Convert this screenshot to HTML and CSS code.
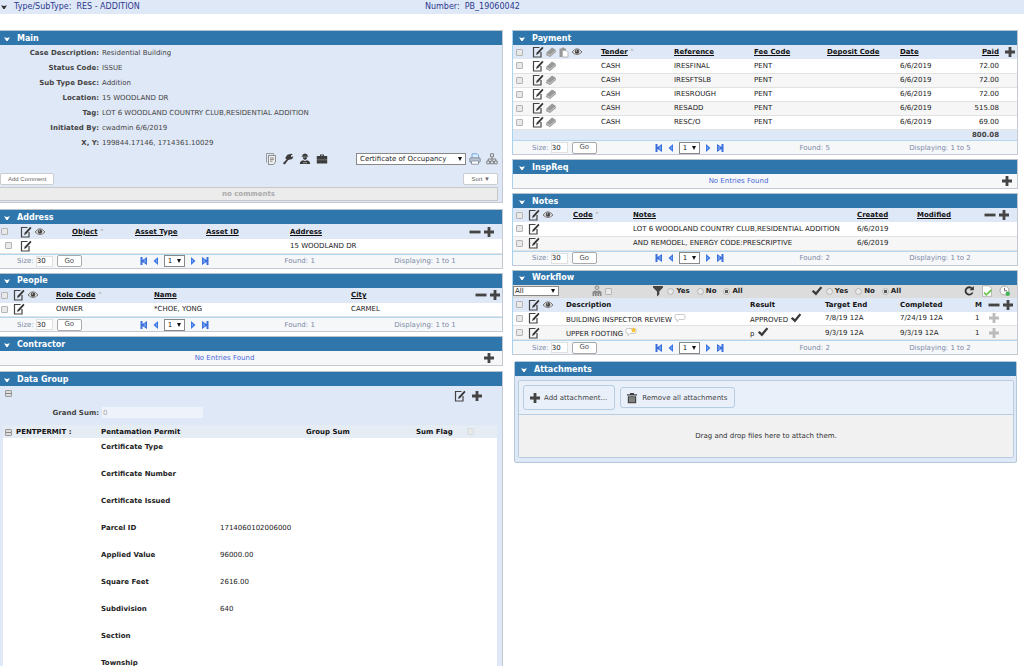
FILE: index.html
```html
<!DOCTYPE html>
<html lang="en">
<head>
<meta charset="utf-8">
<title>RES - ADDITION PB_19060042</title>
<link rel="stylesheet" href="styles.css">
</head>
<body>
<svg class="sprite" aria-hidden="true">
  <symbol id="chev" viewBox="0 0 8 6"><path d="M1 1.2 4 2l3-.8L4.6 5H3.4z" fill="currentColor"/></symbol>
  <symbol id="edit" viewBox="0 0 12 12"><path d="M7.500 1.500H1.500v9.500h7.500V6" fill="none" stroke="#444" stroke-width="1.200"/><path d="M10.300.7 11.500 1.900 6.200 8.100l-2.200 1 .7-2.300z" fill="#333"/></symbol>
  <symbol id="card" viewBox="0 0 12 12"><path d="M1 7 7 1.500 11 4v2L5 11 1 9z" fill="#999"/><path d="M1 7.200 5 9.300 11 4.300" stroke="#ddd" stroke-width=".7" fill="none"/></symbol>
  <symbol id="paste" viewBox="0 0 12 12"><path d="M1.500 2.500h2L5 1l1.500 1.500H8V5H4.500v6h-3z" fill="#999"/><path d="M4.500 4.500h3.500l2 2V11H4.500z" fill="#fff" stroke="#aaa" stroke-width=".8"/></symbol>
  <symbol id="eye" viewBox="0 0 12 12"><path d="M1 6q5-6.500 10 0-5 5-10 0z" fill="#ddd" stroke="#777"/><circle cx="6" cy="5.600" r="2.200" fill="#444"/><circle cx="5.400" cy="4.900" r=".7" fill="#ccc"/></symbol>
  <symbol id="plus" viewBox="0 0 12 12"><path d="M4.600 1h2.800v3.600H11v2.800H7.400V11H4.600V7.400H1V4.600h3.600z" fill="currentColor"/></symbol>
  <symbol id="minus" viewBox="0 0 12 12"><path d="M.5 4.600h11v2.800H.5z" fill="currentColor"/></symbol>
  <symbol id="first" viewBox="0 0 8 8"><path d="M.5 0h2v3L7 0v8L2.500 5v3h-2z" fill="#3a6fdc"/><path d="M5 2.200v3.600" stroke="#8db4f5" stroke-width="1.200"/></symbol>
  <symbol id="prev" viewBox="0 0 8 8"><path d="M6 0v8L1.500 4z" fill="#3a76e4"/><path d="M4.600 3v2" stroke="#86b0f5"/></symbol>
  <symbol id="next" viewBox="0 0 8 8"><path d="M2 0v8l4.500-4z" fill="#3a76e4"/><path d="M3.400 3v2" stroke="#86b0f5"/></symbol>
  <symbol id="last" viewBox="0 0 8 8"><path d="M7.500 0h-2v3L1 0v8l4.500-3v3h2z" fill="#3a6fdc"/><path d="M3 2.200v3.600" stroke="#8db4f5" stroke-width="1.200"/></symbol>
  <symbol id="sort" viewBox="0 0 6 4"><path d="M0 3.500 3 .5l3 3z" fill="#bbb"/></symbol>
  <symbol id="docs" viewBox="0 0 12 12"><path d="M1.500 9.500v-9h7V2" fill="none" stroke="#888" stroke-width=".8"/><path d="M3.500 2.500h7V9l-2 2.500h-5z" fill="#eee" stroke="#777" stroke-width=".8"/><path d="M5 5h4M5 6.600h4M5 8.200h2.500" stroke="#777" stroke-width=".8"/></symbol>
  <symbol id="wrench" viewBox="0 0 12 12"><path d="M.8 10.200 4.600 6.600 3.200 5 5.400 1.800 9 .8l1.800.4-1.900 1.300.3 1.400 2.200-.6-1.200 2.600-3 .9-1 .2-3.400 4.600z" fill="#3c3c3c"/></symbol>
  <symbol id="worker" viewBox="0 0 12 12"><path d="M3 3.200Q3.500.5 6 .5t3 2.700l.8.600H2.200z" fill="#3c3c3c"/><path d="M3.800 4.200h4.400Q8 7 6 7T3.800 4.200M.8 11q0-3 3.200-3.800L6 8l2-.8q3.200.8 3.200 3.800z" fill="#3c3c3c"/><path d="M4 9.800h4" stroke="#ddd" stroke-width=".6"/></symbol>
  <symbol id="case" viewBox="0 0 12 12"><path d="M4 3V1.500h4V3h3.200v7.500H.8V3zm1 0h2v-.6H5z" fill="#3c3c3c"/><path d="M1 6.800h10" stroke="#999" stroke-width=".6"/></symbol>
  <symbol id="printer" viewBox="0 0 12 12"><path d="M3 5V.8h5l1.500 1.500V5" fill="#d9ecff" stroke="#6ba0dc" stroke-width=".9"/><rect x=".8" y="4.800" width="10.400" height="4.500" rx="1" fill="#b9c4d2" stroke="#76818f" stroke-width=".8"/><path d="M2.500 8h7v3.200h-7z" fill="#fff" stroke="#7b8897" stroke-width=".8"/></symbol>
  <symbol id="tree" viewBox="0 0 12 12"><path d="M4.500.800h3v3h-3zM.8 8h2.800v2.800H.8zM4.600 8h2.800v2.800H4.600zM8.400 8h2.800v2.800H8.400zM6 4v4M2.200 8V6h7.600v2" fill="none" stroke="#777" stroke-width=".9"/></symbol>
  <symbol id="funnel" viewBox="0 0 12 12"><path d="M1 1h10v1.500L7.300 6.500v3L5 11.500v-5L1 2.500z" fill="#444"/></symbol>
  <symbol id="group" viewBox="0 0 12 12"><path d="M4 3.200Q3.800.8 6 .8t2 2.400L6 5z" fill="#ccc" stroke="#888"/><path d="M1.500 11V7L4 5.200 6 6.500l2-1.300L10.500 7v4z" fill="#888"/><path d="M3.500 11V8.500M6 11V8M8.500 11V8.500" stroke="#ddd" stroke-width=".7"/></symbol>
  <symbol id="check" viewBox="0 0 12 12"><path d="M.8 6.500 2.500 5 4.800 7 9.500 1.500 11.300 2.800 5 10.500z" fill="#3c3c3c"/></symbol>
  <symbol id="refresh" viewBox="0 0 12 12"><path d="M9 3.500A3.700 3.700 0 1 0 9.600 7.500" fill="none" stroke="#333" stroke-width="1.800"/><path d="M10.800 1v4.200H6.600z" fill="#333"/></symbol>
  <symbol id="pageok" viewBox="0 0 12 12"><path d="M1.500.8H8l2.500 2.500v8h-9z" fill="#fff" stroke="#aaa" stroke-width=".8"/><path d="M3 7.500 5.200 9.800 10.500 5" fill="none" stroke="#6cc552" stroke-width="1.800"/></symbol>
  <symbol id="clock" viewBox="0 0 12 12"><circle cx="5.500" cy="5.500" r="4.500" fill="#fafafa" stroke="#aaa"/><path d="M5.500 2.800v3H8" fill="none" stroke="#777"/><circle cx="8.800" cy="8.800" r="2.200" fill="#45b557"/></symbol>
  <symbol id="bubble" viewBox="0 0 12 12"><path d="M2.500 2.500h7q1.500 0 1.500 1.300v2.400q0 1.300-1.500 1.300H5L3 9.800V7.500q-2 0-2-1.300V3.800q0-1.300 1.500-1.300z" fill="#fff" stroke="#bbb" stroke-width=".8"/></symbol>
  <symbol id="star" viewBox="0 0 12 12"><path d="m8.500 1 .9 1.900 2.100.2-1.600 1.500.5 2.100-1.900-1-1.900 1L7.100 4.600 5.500 3.100l2.100-.2z" fill="#f7c331"/></symbol>
  <symbol id="trash" viewBox="0 0 12 12"><path d="M1 2.200h3V1h4v1.200h3v1.200H1zM1.800 4.200h8.400v7H1.800z" fill="#444"/><path d="M4 5.200v5M6 5.200v5M8 5.200v5" stroke="#ddd" stroke-width=".8"/></symbol>
</svg>

<header class="topbar">
  <svg class="chev"><use href="#chev"/></svg>
  <span class="type">Type/SubType:&nbsp; RES - ADDITION</span>
  <span>Number:&nbsp; PB_19060042</span>
</header>

<main class="columns">
  <div class="col left">
    <section class="panel main-panel">
      <h2><svg class="chev"><use href="#chev"/></svg>Main</h2>
      <dl class="facts">
        <dt>Case Description:</dt><dd>Residential Building</dd>
        <dt>Status Code:</dt><dd>ISSUE</dd>
        <dt>Sub Type Desc:</dt><dd>Addition</dd>
        <dt>Location:</dt><dd>15 WOODLAND DR</dd>
        <dt>Tag:</dt><dd>LOT 6 WOODLAND COUNTRY CLUB,RESIDENTIAL ADDITION</dd>
        <dt>Initiated By:</dt><dd>cwadmin 6/6/2019</dd>
        <dt>X, Y:</dt><dd>199844.17146, 1714361.10029</dd>
      </dl>
      <div class="case-tools">
        <button class="ico" aria-label="Documents"><svg><use href="#docs"/></svg></button>
        <button class="ico" aria-label="Tools"><svg><use href="#wrench"/></svg></button>
        <button class="ico" aria-label="Worker"><svg><use href="#worker"/></svg></button>
        <button class="ico" aria-label="Case"><svg><use href="#case"/></svg></button>
        <span class="drop report"><select aria-label="Report"><option>Certificate of Occupancy</option></select></span>
        <button class="ico" aria-label="Print"><svg><use href="#printer"/></svg></button>
        <button class="ico" aria-label="Hierarchy"><svg><use href="#tree"/></svg></button>
      </div>
      <div class="comment-tools"><button class="small">Add Comment</button><button class="small">Sort ▼</button></div>
      <p class="no-comments">no comments</p>
    </section>

    <section class="panel address">
      <h2><svg class="chev"><use href="#chev"/></svg>Address</h2>
      <table>
        <colgroup><col class="w72"><col class="w63"><col class="w71"><col class="w84"><col><col class="w40"></colgroup>
        <thead><tr>
          <th><div class="tools"><input type="checkbox" aria-label="Select all"><svg><use href="#edit"/></svg><svg><use href="#eye"/></svg></div></th>
          <th><a href="#">Object</a><svg class="sort"><use href="#sort"/></svg></th><th><a href="#">Asset Type</a></th><th><a href="#">Asset ID</a></th><th><a href="#">Address</a></th>
          <th><div class="acts"><svg><use href="#minus"/></svg><svg><use href="#plus"/></svg></div></th>
        </tr></thead>
        <tbody><tr><td><div class="tools inset"><input type="checkbox" aria-label="Select row"><svg><use href="#edit"/></svg></div></td><td></td><td></td><td></td><td>15 WOODLAND DR</td><td></td></tr></tbody>
      </table>
      <div class="pager">
        <div><label for="s1">Size:</label><input id="s1" type="text" value="30"><button>Go</button></div>
        <div class="nav"><svg><use href="#first"/></svg><svg><use href="#prev"/></svg><span class="drop"><select aria-label="Page"><option>1</option></select></span><svg><use href="#next"/></svg><svg><use href="#last"/></svg></div>
        <span>Found: 1</span><span>Displaying: 1 to 1</span>
      </div>
    </section>

    <section class="panel people">
      <h2><svg class="chev"><use href="#chev"/></svg>People</h2>
      <table>
        <colgroup><col class="w56"><col class="w98"><col class="w197"><col><col class="w40"></colgroup>
        <thead><tr>
          <th><div class="tools"><input type="checkbox" aria-label="Select all"><svg><use href="#edit"/></svg><svg><use href="#eye"/></svg></div></th>
          <th><a href="#">Role Code</a><svg class="sort"><use href="#sort"/></svg></th><th><a href="#">Name</a></th><th><a href="#">City</a></th>
          <th><div class="acts"><svg><use href="#minus"/></svg><svg><use href="#plus"/></svg></div></th>
        </tr></thead>
        <tbody><tr><td><div class="tools"><input type="checkbox" aria-label="Select row"><svg><use href="#edit"/></svg></div></td><td>OWNER</td><td>*CHOE, YONG</td><td>CARMEL</td><td></td></tr></tbody>
      </table>
      <div class="pager">
        <div><label for="s2">Size:</label><input id="s2" type="text" value="30"><button>Go</button></div>
        <div class="nav"><svg><use href="#first"/></svg><svg><use href="#prev"/></svg><span class="drop"><select aria-label="Page"><option>1</option></select></span><svg><use href="#next"/></svg><svg><use href="#last"/></svg></div>
        <span>Found: 1</span><span>Displaying: 1 to 1</span>
      </div>
    </section>

    <section class="panel contractor">
      <h2><svg class="chev"><use href="#chev"/></svg>Contractor</h2>
      <div class="empty"><a href="#">No Entries Found</a><button class="ico" aria-label="Add contractor"><svg><use href="#plus"/></svg></button></div>
    </section>

    <section class="panel data-group">
      <h2><svg class="chev"><use href="#chev"/></svg>Data Group</h2>
      <div class="group-tools"><button class="fold" aria-label="Collapse all"></button><span class="acts"><svg><use href="#edit"/></svg><svg><use href="#plus"/></svg></span></div>
      <div class="grand"><label for="grand">Grand Sum:</label><input id="grand" type="text" value="0" disabled></div>
      <table>
        <colgroup><col class="w98"><col class="w119"><col class="w86"><col class="w110"><col></colgroup>
        <thead><tr><th><button class="fold" aria-label="Collapse group"></button>PENTPERMIT :</th><th>Pentamation Permit</th><th></th><th>Group Sum</th><th><label for="flag">Sum Flag</label><input class="flag" id="flag" type="checkbox" disabled></th></tr></thead>
        <tbody>
          <tr><td></td><th>Certificate Type</th><td></td><td></td><td></td></tr>
          <tr><td></td><th>Certificate Number</th><td></td><td></td><td></td></tr>
          <tr><td></td><th>Certificate Issued</th><td></td><td></td><td></td></tr>
          <tr><td></td><th>Parcel ID</th><td>1714060102006000</td><td></td><td></td></tr>
          <tr><td></td><th>Applied Value</th><td>96000.00</td><td></td><td></td></tr>
          <tr><td></td><th>Square Feet</th><td>2616.00</td><td></td><td></td></tr>
          <tr><td></td><th>Subdivision</th><td>640</td><td></td><td></td></tr>
          <tr><td></td><th>Section</th><td></td><td></td><td></td></tr>
          <tr><td></td><th>Township</th><td></td><td></td><td></td></tr>
        </tbody>
      </table>
    </section>
  </div>

  <div class="col right">
    <section class="panel payment">
      <h2><svg class="chev"><use href="#chev"/></svg>Payment</h2>
      <table>
        <colgroup><col class="w88"><col class="w73"><col class="w80"><col class="w73"><col class="w73"><col class="w50"><col><col class="w18"></colgroup>
        <thead><tr>
          <th><div class="tools"><input type="checkbox" aria-label="Select all"><svg><use href="#edit"/></svg><svg><use href="#card"/></svg><svg><use href="#paste"/></svg><svg><use href="#eye"/></svg></div></th>
          <th><a href="#">Tender</a><svg class="sort"><use href="#sort"/></svg></th><th><a href="#">Reference</a></th><th><a href="#">Fee Code</a></th><th><a href="#">Deposit Code</a></th><th><a href="#">Date</a></th><th class="num"><a href="#">Paid</a></th>
          <th><div class="acts"><svg><use href="#plus"/></svg></div></th>
        </tr></thead>
        <tbody>
          <tr><td><div class="tools"><input type="checkbox" aria-label="Select row"><svg><use href="#edit"/></svg><svg><use href="#card"/></svg></div></td><td>CASH</td><td>IRESFINAL</td><td>PENT</td><td></td><td>6/6/2019</td><td class="num">72.00</td><td></td></tr>
          <tr><td><div class="tools"><input type="checkbox" aria-label="Select row"><svg><use href="#edit"/></svg><svg><use href="#card"/></svg></div></td><td>CASH</td><td>IRESFTSLB</td><td>PENT</td><td></td><td>6/6/2019</td><td class="num">72.00</td><td></td></tr>
          <tr><td><div class="tools"><input type="checkbox" aria-label="Select row"><svg><use href="#edit"/></svg><svg><use href="#card"/></svg></div></td><td>CASH</td><td>IRESROUGH</td><td>PENT</td><td></td><td>6/6/2019</td><td class="num">72.00</td><td></td></tr>
          <tr><td><div class="tools"><input type="checkbox" aria-label="Select row"><svg><use href="#edit"/></svg><svg><use href="#card"/></svg></div></td><td>CASH</td><td>RESADD</td><td>PENT</td><td></td><td>6/6/2019</td><td class="num">515.08</td><td></td></tr>
          <tr><td><div class="tools"><input type="checkbox" aria-label="Select row"><svg><use href="#edit"/></svg><svg><use href="#card"/></svg></div></td><td>CASH</td><td>RESC/O</td><td>PENT</td><td></td><td>6/6/2019</td><td class="num">69.00</td><td></td></tr>
        </tbody>
        <tfoot><tr><td colspan="7" class="num">800.08</td><td></td></tr></tfoot>
      </table>
      <div class="pager">
        <div><label for="s3">Size:</label><input id="s3" type="text" value="30"><button>Go</button></div>
        <div class="nav"><svg><use href="#first"/></svg><svg><use href="#prev"/></svg><span class="drop"><select aria-label="Page"><option>1</option></select></span><svg><use href="#next"/></svg><svg><use href="#last"/></svg></div>
        <span>Found: 5</span><span>Displaying: 1 to 5</span>
      </div>
    </section>

    <section class="panel inspreq">
      <h2><svg class="chev"><use href="#chev"/></svg>InspReq</h2>
      <div class="empty"><a href="#">No Entries Found</a><button class="ico" aria-label="Add inspection"><svg><use href="#plus"/></svg></button></div>
    </section>

    <section class="panel notes">
      <h2><svg class="chev"><use href="#chev"/></svg>Notes</h2>
      <table>
        <colgroup><col class="w60"><col class="w60"><col><col class="w60"><col class="w60"><col class="w40"></colgroup>
        <thead><tr>
          <th><div class="tools"><input type="checkbox" aria-label="Select all"><svg><use href="#edit"/></svg><svg><use href="#eye"/></svg></div></th>
          <th><a href="#">Code</a><svg class="sort"><use href="#sort"/></svg></th><th><a href="#">Notes</a></th><th><a href="#">Created</a></th><th><a href="#">Modified</a></th>
          <th><div class="acts"><svg><use href="#minus"/></svg><svg><use href="#plus"/></svg></div></th>
        </tr></thead>
        <tbody>
          <tr><td><div class="tools"><input type="checkbox" aria-label="Select row"><svg><use href="#edit"/></svg></div></td><td></td><td>LOT 6 WOODLAND COUNTRY CLUB,RESIDENTIAL ADDITION</td><td>6/6/2019</td><td></td><td></td></tr>
          <tr><td><div class="tools"><input type="checkbox" aria-label="Select row"><svg><use href="#edit"/></svg></div></td><td></td><td>AND REMODEL, ENERGY CODE:PRESCRIPTIVE</td><td>6/6/2019</td><td></td><td></td></tr>
        </tbody>
      </table>
      <div class="pager">
        <div><label for="s4">Size:</label><input id="s4" type="text" value="30"><button>Go</button></div>
        <div class="nav"><svg><use href="#first"/></svg><svg><use href="#prev"/></svg><span class="drop"><select aria-label="Page"><option>1</option></select></span><svg><use href="#next"/></svg><svg><use href="#last"/></svg></div>
        <span>Found: 2</span><span>Displaying: 1 to 2</span>
      </div>
    </section>

    <section class="panel workflow">
      <h2><svg class="chev"><use href="#chev"/></svg>Workflow</h2>
      <div class="filters">
        <span class="drop kind"><select aria-label="Kind"><option>All</option></select></span>
        <span class="set mine"><svg><use href="#group"/></svg><input type="checkbox" aria-label="Assigned to group"></span>
        <span class="set pick"><svg><use href="#funnel"/></svg><label><input type="radio" name="f">Yes</label><label><input type="radio" name="f">No</label><label><input type="radio" name="f" checked>All</label></span>
        <span class="set pick"><svg><use href="#check"/></svg><label><input type="radio" name="c">Yes</label><label><input type="radio" name="c">No</label><label><input type="radio" name="c" checked>All</label></span>
        <span class="set end"><svg><use href="#refresh"/></svg><svg><use href="#pageok"/></svg><svg><use href="#clock"/></svg></span>
      </div>
      <table>
        <colgroup><col class="w53"><col><col class="w75"><col class="w75"><col class="w75"><col class="w42"></colgroup>
        <thead><tr>
          <th><div class="tools"><input type="checkbox" aria-label="Select all"><svg><use href="#edit"/></svg><svg><use href="#eye"/></svg></div></th>
          <th>Description</th><th>Result</th><th>Target End</th><th>Completed</th>
          <th><div class="acts"><span>M</span><svg><use href="#minus"/></svg><svg><use href="#plus"/></svg></div></th>
        </tr></thead>
        <tbody>
          <tr><td><div class="tools"><input type="checkbox" aria-label="Select row"><svg><use href="#edit"/></svg></div></td><td>BUILDING INSPECTOR REVIEW <svg class="mark"><use href="#bubble"/></svg></td><td>APPROVED <svg class="mark"><use href="#check"/></svg></td><td>7/8/19 12A</td><td>7/24/19 12A</td><td><div class="acts dim"><span>1</span><svg><use href="#plus"/></svg></div></td></tr>
          <tr><td><div class="tools"><input type="checkbox" aria-label="Select row"><svg><use href="#edit"/></svg></div></td><td>UPPER FOOTING <svg class="mark"><use href="#bubble"/><use href="#star"/></svg></td><td>p <svg class="mark"><use href="#check"/></svg></td><td>9/3/19 12A</td><td>9/3/19 12A</td><td><div class="acts dim"><span>1</span><svg><use href="#plus"/></svg></div></td></tr>
        </tbody>
      </table>
      <div class="pager">
        <div><label for="s5">Size:</label><input id="s5" type="text" value="30"><button>Go</button></div>
        <div class="nav"><svg><use href="#first"/></svg><svg><use href="#prev"/></svg><span class="drop"><select aria-label="Page"><option>1</option></select></span><svg><use href="#next"/></svg><svg><use href="#last"/></svg></div>
        <span>Found: 2</span><span>Displaying: 1 to 2</span>
      </div>
    </section>

    <section class="panel attach">
      <h2><svg class="chev"><use href="#chev"/></svg>Attachments</h2>
      <div class="uploader">
        <div class="upload-tools">
          <button class="add"><svg><use href="#plus"/></svg>Add attachment...</button>
          <button class="remove"><svg><use href="#trash"/></svg>Remove all attachments</button>
        </div>
        <p class="dropzone">Drag and drop files here to attach them.</p>
      </div>
    </section>
  </div>
</main>
</body>
</html>
```
FILE: styles.css
```css
* { box-sizing: border-box; }
body {
  margin: 0;
  height: 100vh;
  overflow: hidden;
  background: #fff;
  color: #222;
  font: 7px/10px "DejaVu Sans", sans-serif;
}
.sprite { position: absolute; width: 0; height: 0; }
svg { display: block; width: 12px; height: 12px; flex: none; }
button, input, select { font: inherit; color: inherit; margin: 0; padding: 0; }
a { color: inherit; }
h2, p, dl, dd { margin: 0; }

.topbar {
  display: grid;
  grid-template-columns: 14px 411fr 599fr;
  align-items: center;
  height: 14px;
  background: #dfe8f6;
  color: #2b3990;
  font-size: 8px;
}
.chev { width: 8px; height: 6px; }
.topbar .chev { color: #333; }

.columns {
  display: grid;
  grid-template-columns: 503fr 506fr;
  gap: 9px;
  padding: 16px 6px 0 0;
}
.col { display: flex; flex-direction: column; gap: 4px; min-width: 0; }

.panel {
  border-top: 1px solid #b9c3cc;
  border-right: 1px solid #c5cad2;
  border-bottom: 1px solid #c5cad2;
  background: #dfe8f6;
}
.right .panel { border-left: 1px solid #a9d3ec; }
h2 {
  display: flex;
  align-items: center;
  height: 14px;
  padding: 1px 0 0 3px;
  gap: 6px;
  background: #2e76ac;
  color: #fff;
  font-size: 8px;
  font-weight: bold;
}
.right h2 { padding-left: 5px; }

/* main */
.facts {
  display: grid;
  grid-template-columns: 99px 1fr;
  column-gap: 3px;
  grid-auto-rows: 15px;
  align-items: center;
  color: #444;
}
.facts dt { text-align: right; font-weight: bold; white-space: nowrap; }
.case-tools {
  display: flex;
  align-items: center;
  justify-content: flex-end;
  gap: 5px;
  padding: 3px 4px 0 0;
}
.ico { display: block; border: 0; background: none; width: 12px; height: 12px; }
.drop { position: relative; display: inline-block; }
.drop::after {
  content: "";
  position: absolute;
  right: 4px;
  top: 4px;
  border: 2px solid transparent;
  border-top: 4px solid #111;
  border-bottom: 0;
  pointer-events: none;
}
.drop select {
  appearance: none;
  display: block;
  width: 100%;
  height: 12px;
  padding: 0 3px;
  border: 1px solid #888;
  border-radius: 0;
  background: #fff;
  color: #222;
}
.report { width: 110px; margin-left: 23px; }
.report + .ico { margin-left: -2px; }
.comment-tools { display: flex; justify-content: space-between; padding: 8px 4px 2px 0; }
.small {
  height: 12px;
  padding: 0 7px;
  border: 1px solid #ccc;
  border-radius: 2px;
  background: #fff;
  color: #666;
  font: 6px/10px "Liberation Sans", sans-serif;
}
.no-comments {
  height: 14px;
  margin-right: 4px;
  border: 1px solid #c8c8c8;
  border-left: 0;
  background: #ececec;
  color: #aaa;
  font-weight: bold;
  line-height: 13px;
  text-align: center;
}
.main-panel { margin-bottom: 2px; padding-bottom: 1px; }

/* tables */
table { width: 100%; table-layout: fixed; border-collapse: collapse; }
th, td { padding: 0; height: 14px; text-align: left; white-space: nowrap; }
thead th { color: #111; background: #dfe8f6; }
.left thead th { height: 15px; }
tbody tr { background: #fff; border-bottom: 1px solid #e2e2e2; }
tbody tr:nth-child(even) { background: #f6f6f6; }
.num { text-align: right; }
tfoot td { height: 11px; color: #444; font-weight: bold; }
.w18 { width: 18px; } .w40 { width: 40px; } .w42 { width: 42px; } .w50 { width: 50px; } .w53 { width: 53px; }
.w56 { width: 56px; } .w60 { width: 60px; } .w63 { width: 63px; } .w71 { width: 71px; }
.w72 { width: 72px; } .w73 { width: 73px; } .w75 { width: 75px; } .w80 { width: 80px; }
.w84 { width: 84px; } .w86 { width: 86px; } .w88 { width: 88px; } .w98 { width: 98px; }
.w110 { width: 110px; } .w119 { width: 119px; } .w197 { width: 197px; }

input[type="checkbox"], input[type="radio"] {
  appearance: none;
  width: 7px;
  height: 7px;
  flex: none;
  border: 1px solid #b4b4b4;
  border-radius: 1px;
  background: #e9e9e9;
}
input[type="radio"] { border-radius: 50%; }
input[type="radio"]:checked { background: radial-gradient(#555 40%, #e9e9e9 50%); }
input[type="checkbox"]:disabled { border-color: #d5dce2; }

.tools { display: flex; align-items: center; gap: 2px; padding-left: 1px; }
.tools input { margin-right: 3px; }
.address .tools input { margin-right: 10px; }
.address .tools.inset { padding-left: 5px; }
.address .tools.inset input { margin-right: 6px; }
.right .tools { padding-left: 3px; }
.right .tools input { margin-right: 3px; }
.payment .tools { gap: 1px; }
.payment .tools input { margin-right: 8px; }
.sort { display: inline-block; width: 4px; height: 3px; margin-left: 2px; vertical-align: 3px; }
.acts { display: flex; align-items: center; justify-content: flex-end; gap: 2px; padding-right: 7px; color: #444; }
.people .acts, .payment .acts { padding-right: 1px; }
.workflow .acts { padding-right: 3px; }
.workflow .acts span { margin-right: auto; color: #222; }
.acts.dim { color: #bbb; }
.workflow .acts.dim { padding-right: 17px; }
.mark { display: inline-block; vertical-align: -2px; }

.pager {
  display: grid;
  grid-template-columns: 123fr 145fr 110fr 108fr;
  align-items: center;
  height: 14px;
  padding-left: 17px;
  border-top: 1px solid #b3d7ee;
  background: #f5f7f8;
  color: #7d89a8;
}
.right .pager { padding-left: 19px; }
.pager div { display: flex; align-items: center; }
.pager input { width: 17px; height: 11px; margin: 0 4px 0 2px; border: 1px solid #e0e0e0; background: #fff; color: #222; }
.pager button { width: 25px; height: 12px; border: 1px solid #aaa; border-radius: 2px; background: #fff; color: #555; line-height: 9px; }
.pager svg { width: 8px; height: 8px; }
.pager .nav { gap: 4px; }
.nav .drop { width: 21px; }

.empty {
  display: grid;
  grid-template-columns: 1fr 53px;
  align-items: center;
  height: 14px;
  background: #f5f7f8;
}
.empty a { justify-self: center; color: #4a68d8; text-decoration: none; }
.empty .ico { justify-self: end; margin-right: 7px; color: #444; }
.right .empty .ico { margin-right: 4px; }

/* data group */
.data-group { margin-top: 1px; padding: 0 5px 0 3px; }
.data-group h2 { margin: 0 -5px 0 -3px; }
.group-tools { display: flex; justify-content: space-between; padding: 4px 7px 0 2px; }
.group-tools .acts { gap: 5px; }
.fold { width: 7px; height: 7px; border: 1px solid #999; border-radius: 1px; background: linear-gradient(#ddd 40%, #888 40% 60%, #ddd 60%); }
.grand { display: flex; align-items: center; gap: 3px; padding: 5px 0 7px; color: #444; }
.grand label { width: 96px; text-align: right; font-weight: bold; }
.grand input { width: 101px; height: 11px; border: 0; background: #eef3fb; color: #aaa; padding: 0 1px; }
.data-group thead th { height: 13px; background: #e5ecf3; vertical-align: middle; }
.data-group thead .fold { margin: 0 4px 0 2px; vertical-align: -1px; }
.data-group .flag { margin-left: 14px; vertical-align: -1px; }
.data-group tbody tr { border: 0; background: #fff; }
.data-group tbody th, .data-group tbody td { height: 27px; padding-top: 4px; vertical-align: top; }

/* workflow filter bar */
.filters {
  display: grid;
  grid-template-columns: 78fr 62fr 159fr 153fr 54fr;
  align-items: center;
  height: 13px;
  background: #dcdcdc;
  font-weight: bold;
}
.kind { width: 46px; }
.kind select { height: 10px; padding: 0 1px; line-height: 8px; font-weight: normal; }
.kind::after { top: 3px; }
.set { display: flex; align-items: center; gap: 2px; }
.pick { gap: 7px; }
.pick svg { margin-right: -4px; }
.set label { display: flex; align-items: center; gap: 2px; }
.end { gap: 6px; }

/* attachments */
.right .attach { margin: 2px 1px 0 2px; padding: 0 2px 4px 3px; border: 1px solid #b5c8da; border-radius: 2px; }
.right .attach h2 { margin: 0 -2px 4px -3px; }
.uploader { border: 1px solid #b9cde0; border-radius: 2px; }
.upload-tools { display: flex; align-items: center; gap: 5px; height: 33px; padding: 0 4px; background: #e9f0f9; }
.upload-tools button { display: flex; align-items: center; gap: 3px; padding: 0 7px 0 5px; border: 1px solid #b5cde2; border-radius: 3px; background: #e9f0f9; color: #444; }
.upload-tools .add { height: 25px; }
.upload-tools .remove { height: 21px; gap: 4px; }
.dropzone { height: 43px; border-top: 1px solid #b9cde0; background: #f1f1f1; color: #333; line-height: 42px; text-align: center; }
```
